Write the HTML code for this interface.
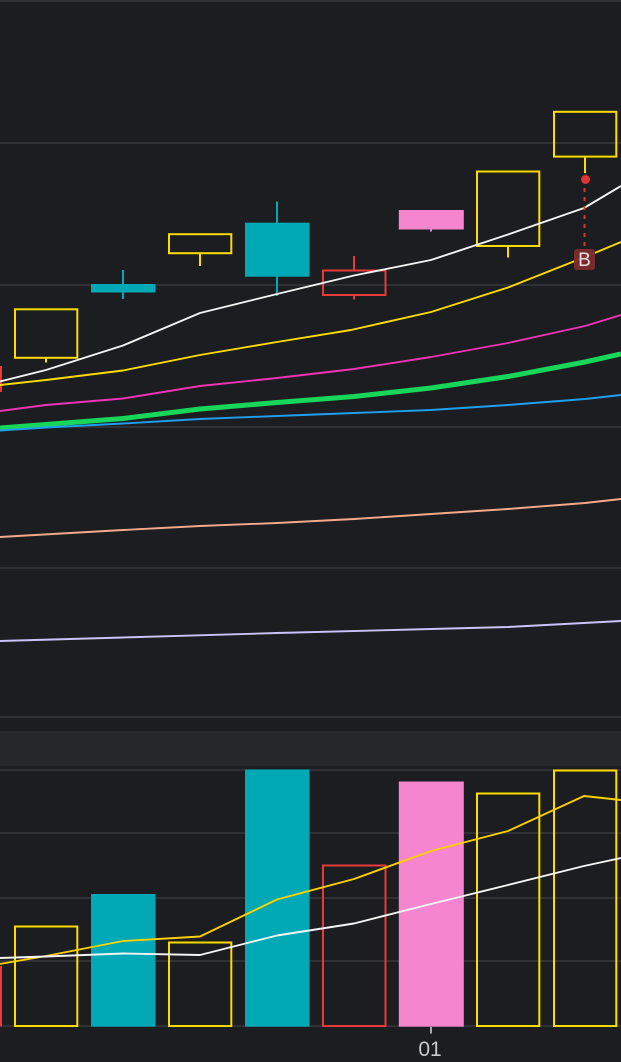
<!DOCTYPE html>
<html><head><meta charset="utf-8"><style>
html,body{margin:0;padding:0;background:#1c1d21;width:621px;height:1062px;overflow:hidden}
svg{display:block}
text{font-family:"Liberation Sans",sans-serif}
</style></head><body>
<svg width="621" height="1062" viewBox="0 0 621 1062" xmlns="http://www.w3.org/2000/svg">
<rect width="621" height="1062" fill="#1c1d21"/>
<rect x="0" y="731" width="621" height="35" fill="#25272b"/>
<g stroke="#36383c" stroke-width="1.500" fill="none">
<path d="M0 1H621M0 143H621M0 285H621M0 427H621M0 568H621M0 717H621M0 770H621M0 833H621M0 898H621M0 961H621M0 1026H621"/>
</g>
<!-- candles -->
<g fill="none" stroke-width="2">
<rect x="0" y="366" width="2" height="26" fill="#e83a3a"/>
<g stroke="#ffdc00">
<rect x="15" y="309.300" width="62.300" height="48.500"/><path d="M46 358V362.500"/>
<rect x="169" y="234.200" width="62.300" height="19"/><path d="M200 253V266"/>
<rect x="477" y="171.500" width="62.300" height="74.500"/><path d="M508 246V257.500"/>
<rect x="554" y="111.800" width="62.300" height="44.800"/><path d="M585 157V173"/>
</g>
<g stroke="#00a9b5">
<path d="M123 270V299"/><path d="M277 201.500V296"/>
</g>
<rect x="91" y="284" width="64.500" height="8.500" fill="#00a9b5"/>
<rect x="245" y="222.700" width="64.500" height="54" fill="#00a9b5"/>
<g stroke="#e83a3a">
<rect x="323" y="270.500" width="62.500" height="24.500"/><path d="M354 256V270M354 295V299.500"/>
</g>
<rect x="398.800" y="210" width="65" height="19.500" fill="#f585cf"/>
<path d="M431 229V231.500" stroke="#f585cf"/>
</g>
<!-- MA lines -->
<g fill="none" stroke-linejoin="round">
<polyline stroke="#f4f4f4" stroke-width="1.900" points="0,381.500 46,370 123,345.500 200,313 277,294 354,275.500 431,260 508,234.500 584,208 621,186"/>
<polyline stroke="#ffdc00" stroke-width="1.900" points="0,385 46,380 123,370.500 200,355 277,342 351,330 431,312 508,287.500 585,257 621,242"/>
<polyline stroke="#f032b4" stroke-width="1.900" points="0,411 46,405 123,398.500 200,386 277,378 354,369 431,357 508,343 585,326 621,315"/>
<polyline stroke="#17d65a" stroke-width="5" points="0,428 46,424.500 123,418.500 200,409 277,402.500 354,396.500 431,388 508,376.500 585,362 621,354"/>
<polyline stroke="#1e9fef" stroke-width="1.900" points="0,430.500 46,427.500 123,423.500 200,419 277,416 354,413 431,410 508,405 585,399 621,395"/>
<polyline stroke="#f7a98a" stroke-width="1.900" points="0,537 123,530 200,526 277,523 354,519 431,514 508,509 585,503 621,499"/>
<polyline stroke="#c9c4ff" stroke-width="1.900" points="0,641 123,637.500 277,633 431,629 508,627 621,621"/>
</g>
<!-- B marker -->
<circle cx="585.500" cy="179.500" r="4.500" fill="#e03434"/>
<path d="M584.500 188V246" stroke="#e03434" stroke-width="2" stroke-dasharray="4 5" fill="none"/>
<rect x="574" y="249" width="21" height="21" rx="3" fill="#7d2c2e" fill-opacity=".95"/>
<text x="584.500" y="266" font-size="19" text-anchor="middle" fill="#e6e0e0">B</text>
<!-- volume -->
<g fill="none" stroke-width="2">
<rect x="0" y="966" width="2" height="60.500" fill="#e83a3a"/>
<g stroke="#ffdc00">
<rect x="15" y="926.500" width="62.300" height="99.500"/>
<rect x="169" y="942.500" width="62.300" height="83.500"/>
<rect x="477" y="793.500" width="62.300" height="232.500"/>
<rect x="554" y="770.500" width="62.300" height="255.500"/>
</g>
<rect x="91" y="894" width="64.500" height="132.700" fill="#00a9b5"/>
<rect x="245" y="769.500" width="64.500" height="257.200" fill="#00a9b5"/>
<rect x="323" y="865.500" width="62.500" height="160.500" stroke="#e83a3a"/>
<rect x="398.800" y="781.500" width="65" height="245.200" fill="#f585cf"/>
</g>
<g fill="none" stroke-linejoin="round">
<polyline stroke="#ffd000" stroke-width="1.900" points="0,964 46,956 123,941 200,936.500 277,899.500 354,879 431,851 508,831 584,796 621,800"/>
<polyline stroke="#f4f4f4" stroke-width="1.900" points="0,958 46,956.500 123,953.500 200,955 277,935.500 354,923.500 431,904 508,885 584,866 621,858"/>
</g>
<!-- axis -->
<path d="M431 1027V1033.500" stroke="#d8dade" stroke-width="1.500"/>
<text x="430" y="1056" font-size="21" text-anchor="middle" fill="#c6cacf">01</text>
</svg>
</body></html>
